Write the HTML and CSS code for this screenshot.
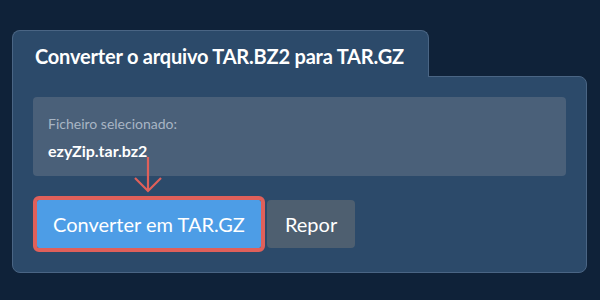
FILE: index.html
```html
<!DOCTYPE html>
<html lang="pt">
  <head>
    <meta charset="UTF-8" />
    <meta name="viewport" content="width=device-width, initial-scale=1.0" />
    <title>Converter TAR.BZ2</title>
    <link rel="stylesheet" href="styles.css">
  </head>
  <body>
    <div class="wrap">
      <div class="tab">
        <h1 class="title">Converter o arquivo TAR.BZ2 para TAR.GZ</h1>
      </div>
      <div class="panel">
        <div class="fileBox">
          <div class="label">Ficheiro selecionado:</div>
          <div class="fileName">ezyZip.tar.bz2</div>
        </div>
        <div class="actions">
          <span class="convertHolder">
            <svg class="arrow" width="30" height="36" viewBox="0 0 30 36">
              <path d="M15 0 V34 M2 21 L15 34 L28 21" fill="none" stroke="#e0605a" stroke-width="2.2" />
            </svg>
            <button class="btn convert">Converter em TAR.GZ</button>
          </span>
          <button class="btn reset">Repor</button>
        </div>
      </div>
    </div>
  </body>
</html>
```

FILE: styles.css
```css
* {
  margin: 0;
  padding: 0;
  box-sizing: border-box;
}
body {
  width: 600px;
  height: 300px;
  background-color: #0f2239;
  font-family: Lato, "Open Sans", sans-serif;
  overflow: hidden;
}
.wrap {
  padding: 30px 13px 0 12px;
}
.tab {
  position: relative;
  z-index: 1;
  width: 417px;
  height: 47px;
  margin-bottom: -1px;
  background-color: #2c4a6a;
  border: 1px solid #4a6584;
  border-bottom: none;
  border-radius: 8px 8px 0 0;
  padding: 0 0 0 22px;
}
.title {
  color: #fff;
  font-size: 20px;
  font-weight: 700;
  line-height: 44px;
  padding-top: 3px;
  letter-spacing: -0.2px;
  white-space: nowrap;
}
.panel {
  background-color: #2c4a6a;
  border: 1px solid #4a6584;
  border-radius: 0 8px 8px 8px;
  padding: 20px 20px 19px 20px;
  height: 197px;
}
.fileBox {
  background-color: #4a6079;
  border-radius: 4px;
  height: 79px;
  padding: 18px 15px 0 15px;
}
.label {
  color: #a8b5c4;
  font-size: 14px;
  line-height: 17px;
}
.fileName {
  color: #fff;
  font-size: 16px;
  font-weight: 700;
  line-height: 20px;
  margin-top: 9px;
}
.actions {
  display: flex;
  align-items: center;
  gap: 6px;
  margin-top: 24px;
  padding-left: 4px;
}
.convertHolder {
  position: relative;
  display: flex;
}
.arrow {
  position: absolute;
  left: 50%;
  margin-left: -16px;
  bottom: 55px;
}
.btn {
  height: 48px;
  padding: 0 16px;
  border: none;
  border-radius: 4px;
  color: #fff;
  font-family: Lato, "Open Sans", sans-serif;
  font-size: 20px;
  cursor: pointer;
}
.convert {
  background-color: #4d9de6;
  outline: 4px solid #e0605a;
  border-radius: 2px;
}
.reset {
  background-color: #4e5f70;
  padding: 0 18px;
}
```
